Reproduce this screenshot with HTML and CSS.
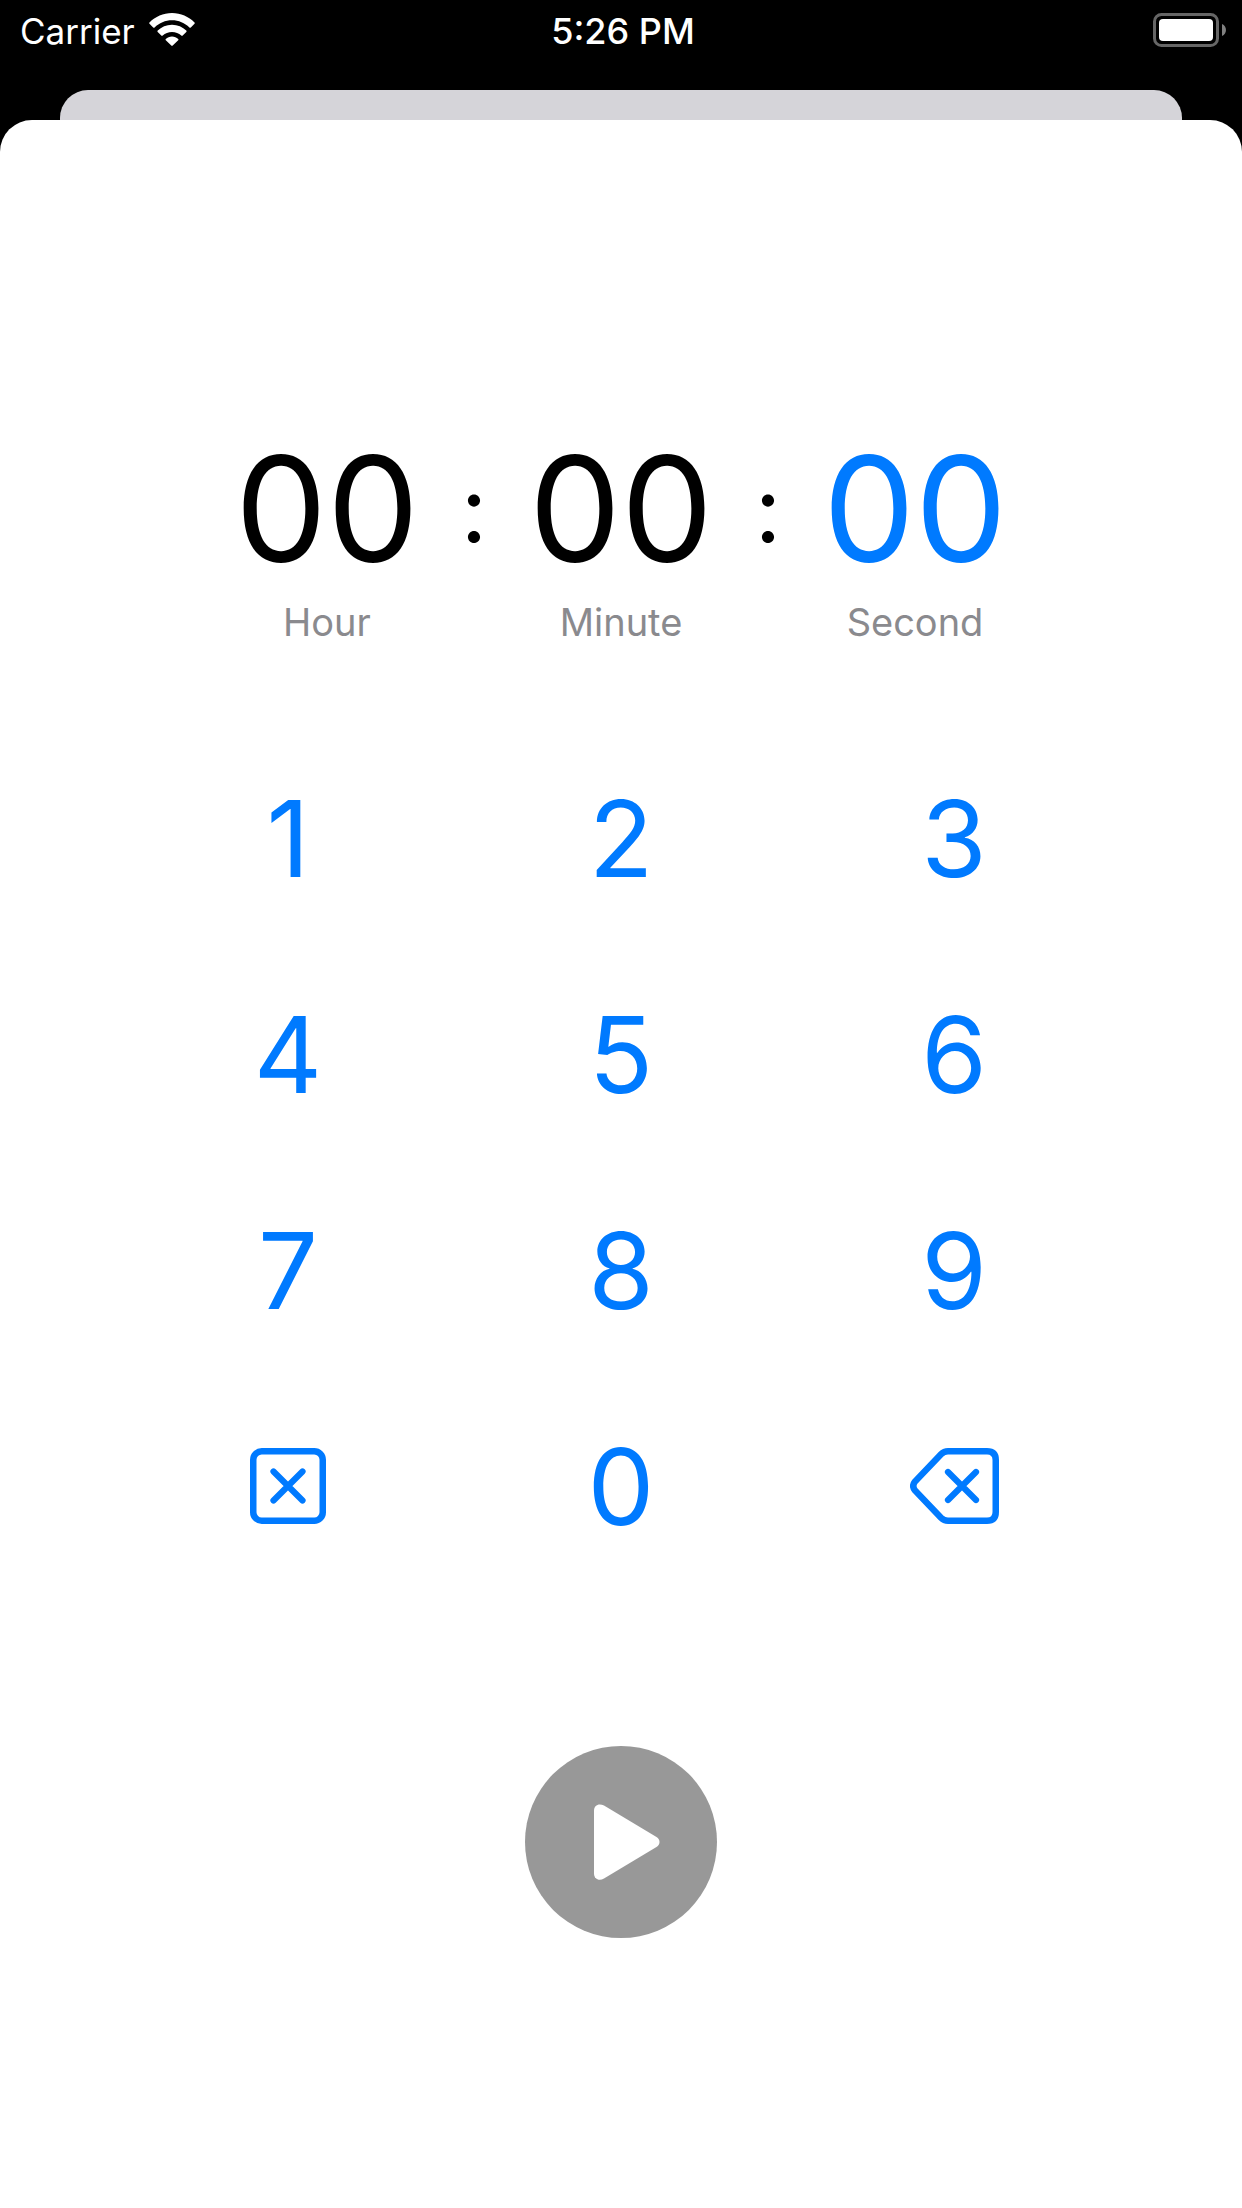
FILE: index.html
```html
<!DOCTYPE html>
<html lang="en">
<head>
<meta charset="utf-8">
<meta name="viewport" content="width=device-width, initial-scale=1">
<title>Timer</title>
<link rel="stylesheet" href="styles.css">
</head>
<body>
<header class="status">
  <div class="status-left">
    <span>Carrier</span>
    <svg width="46" height="34" viewBox="0 0 46 34" fill="#fff" aria-hidden="true">
      <path d="M.5 10.8Q-.2 10.1.5 9.4C6.300 3.600 14.200 0 23 0s16.700 3.600 22.500 9.400q.7.7 0 1.400l-3.700 3.700q-.7.7-1.400 0C35.800 10 29.700 7.300 23 7.300S10.200 10 5.600 14.500q-.7.7-1.400 0z"/>
      <path d="M8.700 19q-.7-.7 0-1.400C12.400 14 17.400 11.700 23 11.700s10.600 2.300 14.300 5.900q.7.700 0 1.400l-3.600 3.600q-.7.700-1.400 0c-2.500-2.400-5.700-3.700-9.300-3.700s-6.800 1.300-9.300 3.700q-.7.700-1.400 0z"/>
      <path d="M16.800 27.200q-.7-.7 0-1.300c1.600-1.500 3.800-2.400 6.200-2.400s4.600.9 6.200 2.400q.7.600 0 1.300l-5.500 5.400q-.7.700-1.400 0z"/>
    </svg>
  </div>
  <time class="status-time">5:26 PM</time>
  <svg class="battery" width="73" height="34" viewBox="0 0 73 34" aria-hidden="true">
    <rect x="1.500" y="1.500" width="63" height="31" rx="7" fill="none" stroke="#666" stroke-width="3"/>
    <rect x="6" y="6" width="54" height="22" rx="4" fill="#fff"/>
    <path d="M69 11c5.300 2 5.300 10 0 12z" fill="#808080"/>
  </svg>
</header>
<div class="back-card"></div>
<main class="sheet">
  <section class="clock">
    <div class="unit"><span class="value">00</span><span class="label">Hour</span></div>
    <span class="colon">:</span>
    <div class="unit"><span class="value">00</span><span class="label">Minute</span></div>
    <span class="colon">:</span>
    <div class="unit"><span class="value active">00</span><span class="label">Second</span></div>
  </section>
  <section class="keypad">
    <button class="key">1</button>
    <button class="key">2</button>
    <button class="key">3</button>
    <button class="key">4</button>
    <button class="key">5</button>
    <button class="key">6</button>
    <button class="key">7</button>
    <button class="key">8</button>
    <button class="key">9</button>
    <button class="key" aria-label="Clear">
      <svg width="76" height="76" viewBox="0 0 76 76" fill="none" stroke="currentColor" aria-hidden="true">
        <rect x="3.250" y="3.250" width="69.500" height="69.500" rx="8.500" stroke-width="6.500"/>
        <path d="M23.500 23.500l29 29M52.500 23.500l-29 29" stroke-width="6.200" stroke-linecap="round"/>
      </svg>
    </button>
    <button class="key">0</button>
    <button class="key" aria-label="Delete">
      <svg width="89" height="76" viewBox="0 0 89 76" fill="none" stroke="currentColor" aria-hidden="true">
        <path d="M38 3.250H77q8.750 0 8.750 8.750V64q0 8.750-8.750 8.750H38q-4 0-7-3L5 42.500q-3.500-4.500 0-9L31 6.250q3-3 7-3z" stroke-width="6.500"/>
        <path d="M38 24l28 28M66 24L38 52" stroke-width="6.200" stroke-linecap="round"/>
      </svg>
    </button>
  </section>
  <button class="play" aria-label="Start">
    <svg width="192" height="192" viewBox="0 0 192 192" fill="#fff" aria-hidden="true">
      <path d="M69 64.500c0-5.500 5-7.500 10-5L131.500 91c4 2.500 4 7.500 0 10L79 132.500c-5 3-10 .5-10-5z"/>
    </svg>
  </button>
</main>
</body>
</html>
```
FILE: styles.css
```css
* {
  box-sizing: border-box;
}

body {
  margin: 0;
  min-height: 100vh;
  display: flex;
  flex-direction: column;
  background: #000;
  font-family: Inter, "Liberation Sans", sans-serif;
}

.status {
  display: grid;
  grid-template-columns: 1fr auto 1fr;
  align-items: center;
  height: 60px;
  margin-bottom: 30px;
  padding: 0 16px 0 20px;
  color: #fff;
  font-size: 35px;
  line-height: 58px;
}

.status-left {
  display: flex;
  align-items: center;
  gap: 14px;
}

.status-left span,
.status-time {
  padding-top: 2px;
}

.status-time {
  font-size: 36px;
  font-weight: 500;
}

.battery {
  justify-self: end;
}

.back-card {
  height: 30px;
  margin: 0 60px;
  border-radius: 28px 28px 0 0;
  background: #d5d4d9;
}

.sheet {
  flex: 1;
  display: flex;
  flex-direction: column;
  align-items: center;
  padding: 299px 24px 100px;
  border-radius: 32px 32px 0 0;
  background: #fff;
}

.clock {
  display: flex;
  justify-content: center;
}

.unit {
  display: flex;
  flex-direction: column;
  align-items: center;
  width: 184px;
}

.value {
  font-size: 146px;
  line-height: 180px;
}

.active,
.key {
  color: #007aff;
}

.label {
  color: #8a8a8e;
  font-size: 38px;
  line-height: 46px;
}

.colon {
  width: 110px;
  font-size: 92px;
  line-height: 180px;
  text-align: center;
}

.keypad {
  display: grid;
  grid-template-columns: repeat(3, 1fr);
  grid-auto-rows: 216px;
  width: 100%;
  max-width: 999px;
  margin-top: 85px;
}

.key {
  display: flex;
  align-items: center;
  justify-content: center;
  padding: 0;
  border: 0;
  background: none;
  font-family: inherit;
  font-size: 106px;
}

.play {
  display: flex;
  margin-top: 152px;
  padding: 0;
  border: 0;
  border-radius: 50%;
  background: #989898;
}
```
